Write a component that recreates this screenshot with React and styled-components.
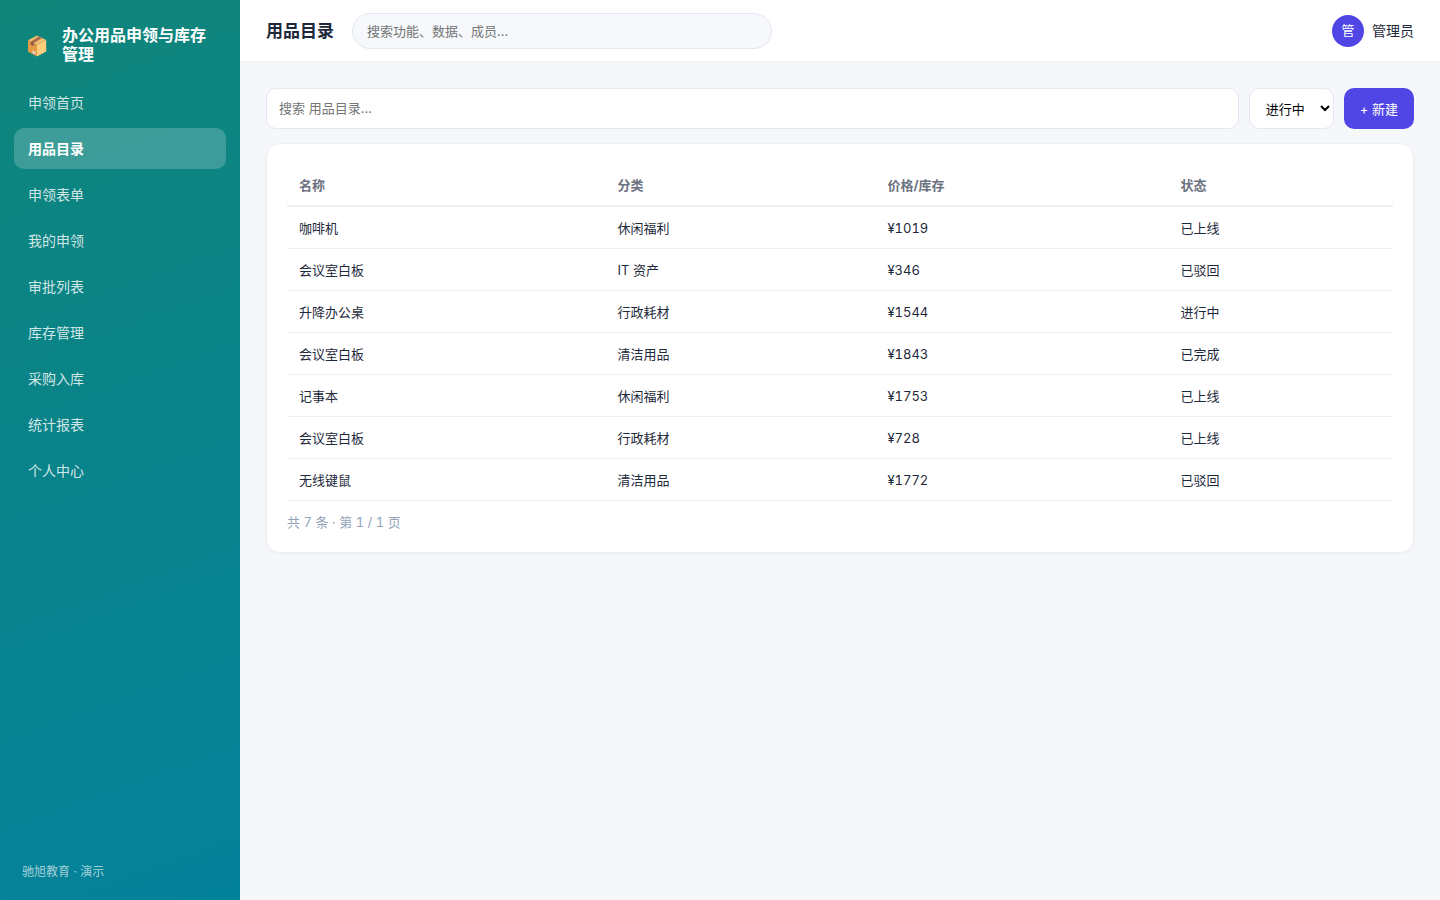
import React, { useState } from "react";
import styled, { createGlobalStyle } from "styled-components";

const navItems = [
  "申领首页",
  "用品目录",
  "申领表单",
  "我的申领",
  "审批列表",
  "库存管理",
  "采购入库",
  "统计报表",
  "个人中心",
];

const columns = [
  { title: "名称", width: "28.8%" },
  { title: "分类", width: "24.4%" },
  { title: "价格/库存", width: "26.5%" },
  { title: "状态", width: "20.3%" },
];

const rows = [
  { id: 1, name: "咖啡机", category: "休闲福利", price: "¥1019", status: "已上线" },
  { id: 2, name: "会议室白板", category: "IT 资产", price: "¥346", status: "已驳回" },
  { id: 3, name: "升降办公桌", category: "行政耗材", price: "¥1544", status: "进行中" },
  { id: 4, name: "会议室白板", category: "清洁用品", price: "¥1843", status: "已完成" },
  { id: 5, name: "记事本", category: "休闲福利", price: "¥1753", status: "已上线" },
  { id: 6, name: "会议室白板", category: "行政耗材", price: "¥728", status: "已上线" },
  { id: 7, name: "无线键鼠", category: "清洁用品", price: "¥1772", status: "已驳回" },
];

const BoxIcon = () => (
  <svg width="20" height="24" viewBox="0 -2 20 24" aria-hidden="true">
    <path d="M10 0.5 19.2 5 10 10 1 5.2Z" fill="#f3bd72" />
    <path d="M1 5.2 10 10V21.5L1 16.8Z" fill="#e59a46" />
    <path d="M19.2 5 10 10V21.5L19.2 16.4Z" fill="#ffcc7c" />
    <path d="M11.8 1.4 15 3 6.5 8.2V11L3.8 9.6V6.7Z" fill="#a5694c" />
    <path d="M3.8 6.7 6.5 8.2V11L3.8 9.6Z" fill="#8d563f" />
    <path d="M5.6 15.6 8.4 17.1V19.8L7.2 18.4 5.6 18.2Z" fill="#dcdde0" />
  </svg>
);

const App = () => {
  const [active, setActive] = useState("用品目录");
  const [status, setStatus] = useState("进行中");

  return (
    <>
      <GlobalStyle />
      <Layout>
        <Sidebar>
          <Brand>
            <BoxIcon />
            <span>办公用品申领与库存管理</span>
          </Brand>
          <Nav>
            {navItems.map((item) => (
              <NavItem
                key={item}
                href="#"
                $active={item === active}
                onClick={() => setActive(item)}
              >
                {item}
              </NavItem>
            ))}
          </Nav>
          <SideFooter>驰旭教育 · 演示</SideFooter>
        </Sidebar>

        <Main>
          <TopBar>
            <Title>用品目录</Title>
            <GlobalSearch
              type="search"
              aria-label="全局搜索"
              placeholder="搜索功能、数据、成员…"
            />
            <User>
              <Avatar>管</Avatar>
              <span>管理员</span>
            </User>
          </TopBar>

          <Content>
            <Toolbar>
              <SearchInput
                type="text"
                aria-label="搜索用品目录"
                placeholder="搜索 用品目录..."
              />
              <StatusSelect
                aria-label="状态"
                value={status}
                onChange={(e) => setStatus(e.target.value)}
              >
                <option>进行中</option>
                <option>已上线</option>
                <option>已完成</option>
                <option>已驳回</option>
              </StatusSelect>
              <CreateButton type="button">+ 新建</CreateButton>
            </Toolbar>

            <Card>
              <Table>
                <thead>
                  <tr>
                    {columns.map((col) => (
                      <HeadCell key={col.title} $width={col.width}>
                        {col.title}
                      </HeadCell>
                    ))}
                  </tr>
                </thead>
                <tbody>
                  {rows.map((row) => (
                    <tr key={row.id}>
                      <Cell>{row.name}</Cell>
                      <Cell>{row.category}</Cell>
                      <Cell>{row.price}</Cell>
                      <Cell>{row.status}</Cell>
                    </tr>
                  ))}
                </tbody>
              </Table>
              <Pager>共 7 条 · 第 1 / 1 页</Pager>
            </Card>
          </Content>
        </Main>
      </Layout>
    </>
  );
};

const GlobalStyle = createGlobalStyle`
  * {
    box-sizing: border-box;
  }
  body {
    margin: 0;
    background: #f5f7fb;
    color: #1e293b;
    font-family: Inter, "Noto Sans CJK SC", sans-serif;
    font-size: 14px;
    line-height: 19px;
  }
  input, select, button {
    font-family: inherit;
    font-size: 13px;
    line-height: 19px;
  }
`;

const Layout = styled.div`
  display: flex;
  min-height: 100vh;
`;

const Sidebar = styled.aside`
  display: flex;
  flex-direction: column;
  flex: 0 0 240px;
  padding: 26px 14px 19px;
  color: #ffffff;
  background: linear-gradient(160deg, #0f857a, #04829b);
`;

const Brand = styled.div`
  display: flex;
  align-items: center;
  gap: 15px;
  padding: 0 12px 18px 13px;
  font-size: 16px;
  font-weight: 700;

  svg {
    flex: none;
  }
`;

const Nav = styled.nav`
  display: flex;
  flex-direction: column;
  gap: 5px;
`;

const NavItem = styled.a`
  padding: 11px 14px;
  border-radius: 10px;
  text-decoration: none;
  color: ${({ $active }) => ($active ? "#ffffff" : "rgba(255, 255, 255, 0.82)")};
  background: ${({ $active }) => ($active ? "rgba(255, 255, 255, 0.2)" : "transparent")};
  font-weight: ${({ $active }) => ($active ? 700 : 400)};
`;

const SideFooter = styled.div`
  margin-top: auto;
  padding: 0 8px;
  font-size: 12px;
  color: rgba(255, 255, 255, 0.65);
`;

const Main = styled.main`
  flex: 1;
  min-width: 0;
`;

const TopBar = styled.header`
  display: flex;
  align-items: center;
  gap: 18px;
  height: 62px;
  padding: 0 26px;
  background: #ffffff;
  border-bottom: 1px solid #eef0f4;
`;

const Title = styled.h1`
  margin: 0;
  font-size: 17px;
  line-height: 22px;
  font-weight: 700;
`;

const GlobalSearch = styled.input`
  width: 420px;
  height: 36px;
  padding: 0 14px;
  border: 1px solid #e4e7ef;
  border-radius: 18px;
  background: #f6f8fc;
  outline: none;

  &::placeholder {
    color: #757575;
  }
`;

const User = styled.div`
  display: flex;
  align-items: center;
  gap: 8px;
  margin-left: auto;
`;

const Avatar = styled.span`
  display: grid;
  place-items: center;
  width: 32px;
  height: 32px;
  border-radius: 50%;
  background: #4f46e5;
  color: #ffffff;
  font-size: 13px;
`;

const Content = styled.div`
  padding: 26px;
`;

const Toolbar = styled.div`
  display: flex;
  gap: 10px;
  margin-bottom: 14px;
`;

const SearchInput = styled.input`
  flex: 1;
  min-width: 0;
  padding: 0 12px;
  border: 1px solid #e4e7ef;
  border-radius: 10px;
  background: #ffffff;
  outline: none;

  &::placeholder {
    color: #757575;
  }
`;

const StatusSelect = styled.select`
  width: 85px;
  padding: 0 0 0 12px;
  border: 1px solid #e4e7ef;
  border-radius: 10px;
  background: #ffffff;
  color: #000000;
`;

const CreateButton = styled.button`
  padding: 12px 16px 10px;
  border: none;
  border-radius: 10px;
  background: #4f46e5;
  color: #ffffff;
  cursor: pointer;
`;

const Card = styled.section`
  padding: 20px;
  border: 1px solid #eef0f4;
  border-radius: 14px;
  background: #ffffff;
  box-shadow: 0 1px 3px rgba(15, 23, 42, 0.04);
  font-size: 13px;
  font-variant-numeric: tabular-nums;
`;

const Table = styled.table`
  width: 100%;
  border-collapse: separate;
  border-spacing: 0;
  table-layout: fixed;
  font-size: 13px;
`;

const HeadCell = styled.th`
  width: ${({ $width }) => $width};
  padding: 12px 12px 10px;
  border-bottom: 2px solid #eef0f4;
  color: #6b7280;
  font-weight: 700;
  text-align: left;
`;

const Cell = styled.td`
  padding: 12px 12px 10px;
  border-bottom: 1px solid #eef0f4;
`;

const Pager = styled.div`
  padding-top: 12px;
  color: #94a3b8;
`;

export default App;
